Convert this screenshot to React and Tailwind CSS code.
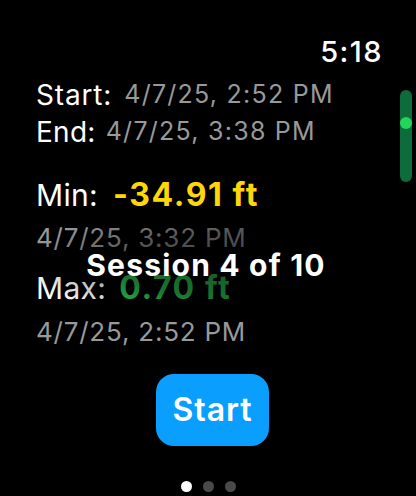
const font = { fontFamily: "Inter, 'Noto Sans', sans-serif" };

const Row = ({ className = "", children }) => (
  <div className={`flex items-center whitespace-nowrap ${className}`}>{children}</div>
);

export default function App() {
  return (
    <div
      className="relative h-[496px] w-[416px] overflow-hidden bg-black text-white"
      style={font}
    >
      {/* status time */}
      <div className="mt-[37px] flex h-[30px] items-center justify-end pr-[33px] text-[29px] font-medium tracking-[0.05em]">
        5:18
      </div>

      <div className="pl-[36px]">
        <Row className="mt-[10px] h-[36px]">
          <span className="text-[28px] tracking-[0.03em]">Start:</span>
          <span className="ml-[12px] text-[25px] tracking-[0.05em] text-[#999999]">
            4/7/25, 2:52 PM
          </span>
        </Row>
        <Row className="h-[38px]">
          <span className="text-[28px] tracking-[0.01em]">End:</span>
          <span className="ml-[10px] text-[25px] tracking-[0.05em] text-[#999999]">
            4/7/25, 3:38 PM
          </span>
        </Row>

        <Row className="mt-[24px] h-[40px]">
          <span className="text-[30px] tracking-[0.01em]">Min:</span>
          <span className="ml-[15px] text-[32px] font-bold tracking-[0.05em] text-[#ffd60a]">
            -34.91 ft
          </span>
        </Row>
        <Row className="mt-[2px] h-[40px] text-[26px] tracking-[0.03em] text-[#999999]">
          4/7/25, 3:32 PM
        </Row>

        <Row className="mt-[11px] h-[40px]">
          <span className="text-[30px] tracking-[0.01em]">Max:</span>
          <span className="ml-[13px] text-[32px] font-bold tracking-[0.05em] text-[#30d158]">
            0.70 ft
          </span>
        </Row>
        <Row className="mt-[3px] h-[40px] text-[26px] tracking-[0.03em] text-[#999999]">
          4/7/25, 2:52 PM
        </Row>
      </div>

      <div className="mt-[23px] flex pl-[156px]">
        <button className="flex h-[72px] w-[113px] items-center justify-center rounded-[18px] bg-[#0a9eff] text-[32px] font-semibold tracking-[0.03em] text-white">
          Start
        </button>
      </div>

      <div className="mt-[34px] flex h-[12px] items-center justify-center gap-[11px]">
        <span className="h-[11px] w-[11px] rounded-full bg-white" />
        <span className="h-[11px] w-[11px] rounded-full bg-[#4a4a4a]" />
        <span className="h-[11px] w-[11px] rounded-full bg-[#4a4a4a]" />
      </div>

      {/* dimming behind the title */}
      <div className="pointer-events-none absolute left-0 right-0 top-[210px] h-[100px] bg-[radial-gradient(ellipse_220px_60px_at_240px_55px,rgba(0,0,0,0.6),rgba(0,0,0,0.45)_55%,transparent_100%)]" />

      {/* title overlay */}
      <div className="absolute left-0 right-0 top-[250px] flex h-[30px] items-center justify-center pr-[4px] text-[30px] font-bold tracking-[0.04em]">
        Session 4 of 10
      </div>

      {/* scroll indicator */}
      <div className="absolute left-[400px] top-[90px] h-[92px] w-[12px] rounded-full bg-[#0e6b3b]">
        <div className="absolute left-0 top-[27px] h-[12px] w-[12px] rounded-full bg-[#22d65a]" />
      </div>
    </div>
  );
}
